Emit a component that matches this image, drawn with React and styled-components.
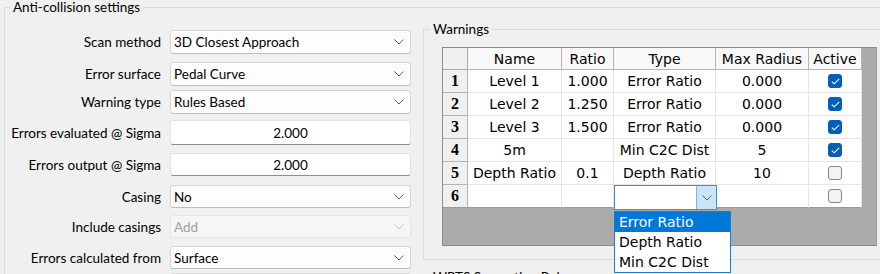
import React from "react";
import styled, { createGlobalStyle } from "styled-components";

const Global = createGlobalStyle`
  html, body { margin: 0; padding: 0; background: #f0f0f0; overflow: hidden; }
  #root { width: 880px; height: 274px; overflow: hidden; }
`;

const Page = styled.div`
  width: 880px;
  height: 274px;
  padding-left: 4px;
  box-sizing: border-box;
  font-family: Lato, "Noto Sans", sans-serif;
  font-size: 13.5px;
  color: #000;
`;

const Group = styled.div`
  border: 1px solid #dcdcdc;
  margin-top: ${(p) => p.$mt || 0}px;
  width: ${(p) => p.$w}px;
  padding-bottom: ${(p) => p.$pb || 0}px;
  box-sizing: border-box;
`;

const GroupTitle = styled.div`
  width: fit-content;
  margin: -8px 0 0 ${(p) => p.$ml || 5}px;
  padding: 0 3px;
  line-height: 14px;
  height: 14px;
  background: #f0f0f0;
  white-space: nowrap;
  font-family: Lato, "Noto Sans", sans-serif;
  font-size: 13.5px;
`;

const Columns = styled.div`
  display: flex;
  align-items: flex-start;
  gap: 12px;
`;

const Form = styled.div`
  display: flex;
  flex-direction: column;
  width: 406px;
`;

const FieldRow = styled.div`
  display: grid;
  grid-template-columns: 156px 241px;
  column-gap: 9px;
  align-items: center;
  margin-top: ${(p) => p.$mt}px;
  height: ${(p) => p.$h}px;
`;

const Label = styled.div`
  text-align: right;
  white-space: nowrap;
  font-size: 13.5px;
`;

const ComboBox = styled.div`
  height: ${(p) => p.$h}px;
  box-sizing: border-box;
  border: 1px solid ${(p) => (p.$disabled ? "#e6e6e6" : "#d6d6d6")};
  border-bottom-color: ${(p) => (p.$disabled ? "#e6e6e6" : "#bdbdbd")};
  border-radius: 3px;
  background: ${(p) => (p.$disabled ? "#f6f6f6" : "#fdfdfd")};
  color: ${(p) => (p.$disabled ? "#a0a0a0" : "#000")};
  display: flex;
  align-items: center;
  justify-content: space-between;
  padding: 0 6px 0 3px;
  white-space: nowrap;
`;

const TextBox = styled.div`
  height: ${(p) => p.$h}px;
  box-sizing: border-box;
  border: 1px solid #e3e3e3;
  border-bottom-color: #8f8f8f;
  border-radius: 3px;
  background: #ffffff;
  display: flex;
  align-items: center;
  justify-content: center;
`;

const Chevron = ({ color = "#606060" }) => (
  <svg width="10" height="6" viewBox="0 0 10 6">
    <polyline points="0.5,0.5 5,5 9.5,0.5" fill="none" stroke={color} strokeWidth="1" />
  </svg>
);

const RightColumn = styled.div`
  display: flex;
  flex-direction: column;
`;

const TableFrame = styled.div`
  margin: 11px 0 0 18px;
  width: 435px;
  height: 199px;
  box-sizing: border-box;
  border: 1px solid #8a8a8a;
  border-right-color: #a0a0a0;
  background: #ababab;
  position: relative;
`;

const Grid = styled.div`
  display: grid;
  grid-template-columns: 25px 94px 52px 102px 93px 53px;
  grid-template-rows: 22px repeat(6, 23px);
  width: 419px;
  background: #ffffff;
  font-family: "DejaVu Sans", Verdana, sans-serif;
  font-size: 14px;
`;

const cellBg = { corner: "#f0f0f0", head: "#f8f8f8", rowhead: "#f0f0f0", data: "#ffffff" };
const cellBorder = { corner: "#a8a8a8", head: "#b4b4b4", rowhead: "#b4b4b4", data: "#e6e6e6" };

const Cell = styled.div`
  position: relative;
  box-sizing: border-box;
  background: ${(p) => cellBg[p.$kind]};
  border-right: 1px solid ${(p) => cellBorder[p.$kind]};
  border-bottom: 1px solid ${(p) => (p.$last ? "#9a9a9a" : cellBorder[p.$kind])};
  display: flex;
  align-items: center;
  justify-content: center;
  white-space: nowrap;
  color: #000;
  font-family: ${(p) => (p.$kind === "rowhead" ? '"Liberation Serif", "Times New Roman", serif' : "inherit")};
  font-weight: ${(p) => (p.$kind === "rowhead" ? 700 : 400)};
  font-size: ${(p) => (p.$kind === "rowhead" ? "16px" : "14px")};
`;

const CheckBox = styled.div`
  width: 14px;
  height: 14px;
  box-sizing: border-box;
  border-radius: 3px;
  background: ${(p) => (p.$checked ? "#005fb8" : "#f3f3f3")};
  border: 1px solid ${(p) => (p.$checked ? "#005fb8" : "#858585")};
  display: flex;
  align-items: center;
  justify-content: center;
`;

const Editor = styled.div`
  position: absolute;
  left: 0;
  top: 0;
  width: 103px;
  height: 25px;
  box-sizing: border-box;
  border: 1px solid #3f8fd6;
  background: #ffffff;
  display: flex;
  justify-content: flex-end;
  z-index: 2;
`;

const EditorButton = styled.div`
  width: 19px;
  height: 100%;
  background: #cce4f7;
  border-left: 1px solid #7eb4ea;
  display: flex;
  align-items: center;
  justify-content: center;
`;

const Popup = styled.div`
  position: absolute;
  left: 0;
  top: 26px;
  width: 117px;
  box-sizing: border-box;
  border: 1px solid #1c7ad6;
  background: #ffffff;
  z-index: 3;
`;

const PopupItem = styled.div`
  height: 20px;
  line-height: 20px;
  padding-left: 4px;
  text-align: left;
  font-family: "DejaVu Sans", Verdana, sans-serif;
  font-size: 14px;
  background: ${(p) => (p.$active ? "#0078d7" : "transparent")};
  color: ${(p) => (p.$active ? "#ffffff" : "#000")};
`;

const fields = [
  { label: "Scan method", kind: "combo", value: "3D Closest Approach", mt: 16, h: 24 },
  { label: "Error surface", kind: "combo", value: "Pedal Curve", mt: 8, h: 24 },
  { label: "Warning type", kind: "combo", value: "Rules Based", mt: 4, h: 24 },
  { label: "Errors evaluated @ Sigma", kind: "text", value: "2.000", mt: 6, h: 25 },
  { label: "Errors output @ Sigma", kind: "text", value: "2.000", mt: 8, h: 23 },
  { label: "Casing", kind: "combo", value: "No", mt: 9, h: 23 },
  { label: "Include casings", kind: "combo", value: "Add", mt: 7, h: 23, disabled: true },
  { label: "Errors calculated from", kind: "combo", value: "Surface", mt: 8, h: 23 },
  { label: "", kind: "combo", value: "", mt: 4, h: 23 },
];

const rows = [
  ["Level 1", "1.000", "Error Ratio", "0.000", true],
  ["Level 2", "1.250", "Error Ratio", "0.000", true],
  ["Level 3", "1.500", "Error Ratio", "0.000", true],
  ["5m", "", "Min C2C Dist", "5", true],
  ["Depth Ratio", "0.1", "Depth Ratio", "10", false],
  ["", "", null, "", false],
];

const headers = ["Name", "Ratio", "Type", "Max Radius", "Active"];

const Check = ({ checked }) => (
  <CheckBox $checked={checked}>
    {checked && (
      <svg width="9" height="7" viewBox="0 0 9 7">
        <polyline points="0.8,3.6 3.2,5.8 8.2,0.8" fill="none" stroke="#ffffff" strokeWidth="1.1" />
      </svg>
    )}
  </CheckBox>
);

export default function App() {
  return (
    <>
      <Global />
      <Page>
        <Group $mt={7} $w={920}>
          <GroupTitle $ml={5}>Anti-collision settings</GroupTitle>
          <Columns>
            <Form>
              {fields.map((f, i) => (
                <FieldRow key={i} $mt={f.mt} $h={f.h}>
                  <Label>{f.label}</Label>
                  {f.kind === "combo" ? (
                    <ComboBox $h={f.h} $disabled={f.disabled}>
                      <span>{f.value}</span>
                      <Chevron color={f.disabled ? "#c4c4c4" : "#606060"} />
                    </ComboBox>
                  ) : (
                    <TextBox $h={f.h}>{f.value}</TextBox>
                  )}
                </FieldRow>
              ))}
            </Form>
            <RightColumn>
              <Group $mt={15} $w={500} $pb={13}>
                <GroupTitle $ml={6}>Warnings</GroupTitle>
                <TableFrame>
                  <Grid>
                    <Cell $kind="corner" />
                    {headers.map((h) => (
                      <Cell key={h} $kind="head">{h}</Cell>
                    ))}
                    {rows.map((r, i) => {
                      const last = i === rows.length - 1;
                      return (
                        <React.Fragment key={i}>
                          <Cell $kind="rowhead" $last={last}>{i + 1}</Cell>
                          <Cell $kind="data" $last={last}>{r[0]}</Cell>
                          <Cell $kind="data" $last={last}>{r[1]}</Cell>
                          <Cell $kind="data" $last={last}>
                            {r[2] === null ? (
                              <>
                                <Editor>
                                  <EditorButton>
                                    <Chevron color="#606060" />
                                  </EditorButton>
                                </Editor>
                                <Popup>
                                  <PopupItem $active>Error Ratio</PopupItem>
                                  <PopupItem>Depth Ratio</PopupItem>
                                  <PopupItem>Min C2C Dist</PopupItem>
                                </Popup>
                              </>
                            ) : (
                              r[2]
                            )}
                          </Cell>
                          <Cell $kind="data" $last={last}>{r[3]}</Cell>
                          <Cell $kind="data" $last={last}>
                            <Check checked={r[4]} />
                          </Cell>
                        </React.Fragment>
                      );
                    })}
                  </Grid>
                </TableFrame>
              </Group>
              <Group $mt={17} $w={500}>
                <GroupTitle $ml={6}>WPTS Separation Rules</GroupTitle>
              </Group>
            </RightColumn>
          </Columns>
        </Group>
      </Page>
    </>
  );
}
